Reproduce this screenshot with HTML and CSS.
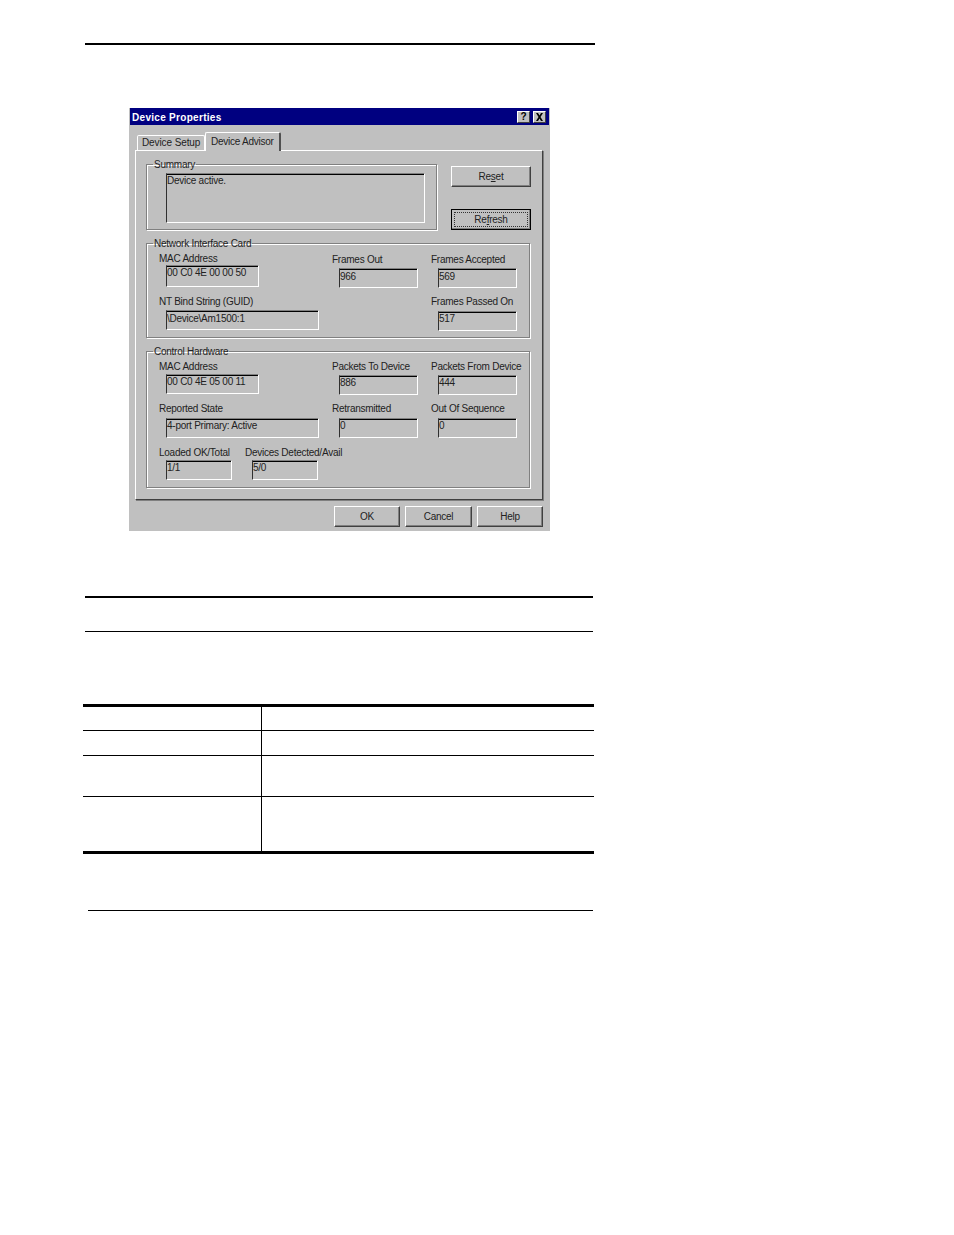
FILE: index.html
```html
<!DOCTYPE html>
<html lang="en">
<head>
    <meta charset="UTF-8">
    <meta name="viewport" content="width=device-width, initial-scale=1.0">
    <title>Device Properties</title>
    <link rel="stylesheet" href="styles.css">
</head>
<body>
    <div class="rule rule-top"></div>

    <div class="dialog">
        <div class="titlebar">
            <span class="title-text">Device Properties</span>
            <span class="title-btn">?</span>
            <span class="title-btn title-close">
                <svg width="9" height="8" viewBox="0 0 9 8"><path d="M1 0h2l1.500 2.500L6 0h2L5.500 4 8 8H6L4.500 5.500 3 8H1l2.500-4z" fill="#000"/></svg>
            </span>
        </div>

        <div class="tabs">
            <div class="tab">Device Setup</div>
            <div class="tab tab-active">Device Advisor</div>
        </div>

        <div class="panel">
            <div class="top-row">
                <fieldset class="group group-summary">
                    <legend>Summary</legend>
                    <div class="field field-summary">Device active.</div>
                </fieldset>
                <div class="side-buttons">
                    <button class="btn btn-side">Re<u>s</u>et</button>
                    <button class="btn btn-side btn-default"><span class="focus">Re<u>f</u>resh</span></button>
                </div>
            </div>

            <fieldset class="group group-nic">
                <legend>Network Interface Card</legend>
                <div class="fields">
                    <div class="cell">
                        <label>MAC Address</label>
                        <div class="field f-wide m1 h22">00 C0 4E 00 00 50</div>
                    </div>
                    <div class="cell shift1">
                        <label>Frames Out</label>
                        <div class="field f-small m3">966</div>
                    </div>
                    <div class="cell shift1">
                        <label>Frames Accepted</label>
                        <div class="field f-small m3">569</div>
                    </div>
                    <div class="cell">
                        <label>NT Bind String (GUID)</label>
                        <div class="field f-long m3">\Device\Am1500:1</div>
                    </div>
                    <div class="cell col3">
                        <label>Frames Passed On</label>
                        <div class="field f-small m4">517</div>
                    </div>
                </div>
            </fieldset>

            <fieldset class="group group-hw">
                <legend>Control Hardware</legend>
                <div class="fields">
                    <div class="cell">
                        <label>MAC Address</label>
                        <div class="field f-wide m2">00 C0 4E 05 00 11</div>
                    </div>
                    <div class="cell">
                        <label>Packets To Device</label>
                        <div class="field f-small m3">886</div>
                    </div>
                    <div class="cell">
                        <label>Packets From Device</label>
                        <div class="field f-small m3">444</div>
                    </div>
                    <div class="cell">
                        <label>Reported State</label>
                        <div class="field f-long m4">4-port Primary: Active</div>
                    </div>
                    <div class="cell">
                        <label>Retransmitted</label>
                        <div class="field f-small m4">0</div>
                    </div>
                    <div class="cell">
                        <label>Out Of Sequence</label>
                        <div class="field f-small m4">0</div>
                    </div>
                    <div class="cell-pair">
                        <div class="cell pair-left">
                            <label>Loaded OK/Total</label>
                            <div class="field f-tiny m2">1/1</div>
                        </div>
                        <div class="cell">
                            <label>Devices Detected/Avail</label>
                            <div class="field f-tiny m2">5/0</div>
                        </div>
                    </div>
                </div>
            </fieldset>
        </div>

        <div class="footer">
            <button class="btn btn-foot">OK</button>
            <button class="btn btn-foot btn-cancel">Cancel</button>
            <button class="btn btn-foot">Help</button>
        </div>
    </div>

    <div class="rule rule-section"></div>
    <div class="rule rule-thin"></div>

    <!-- table cells are blank in the source page -->
    <table class="info-table">
        <tr class="row-1"><td class="col-name"></td><td></td></tr>
        <tr class="row-2"><td class="col-name"></td><td></td></tr>
        <tr class="row-3"><td class="col-name"></td><td></td></tr>
        <tr class="row-4"><td class="col-name"></td><td></td></tr>
    </table>

    <div class="rule rule-end"></div>
</body>
</html>
```

FILE: styles.css
```css
body {
    margin: 0;
    padding-top: 43px;
    background-color: #fff;
    font-family: "Liberation Sans", Arial, sans-serif;
    font-size: 10px;
    letter-spacing: -0.25px;
    color: #222;
}
.rule {
    background-color: #000;
}
.rule-top {
    height: 2px;
    width: 510px;
    margin-left: 85px;
}
.rule-section {
    height: 2px;
    width: 508px;
    margin: 65px 0 0 85px;
}
.rule-thin {
    height: 1px;
    width: 508px;
    margin: 33px 0 0 85px;
}
.rule-end {
    height: 1px;
    width: 505px;
    margin: 56px 0 0 88px;
}

/* Dialog window */
.dialog {
    width: 421px;
    height: 423px;
    margin: 63px 0 0 129px;
    background-color: #c0c0c0;
}
.titlebar {
    display: flex;
    align-items: center;
    height: 17px;
    margin: 0 1px;
    padding: 0 3px 0 2px;
    background-color: #000080;
    color: #fff;
}
.title-text {
    flex: 1;
    padding-top: 2px;
    font-weight: bold;
    letter-spacing: 0.3px;
}
.title-btn {
    display: flex;
    align-items: center;
    justify-content: center;
    width: 13px;
    height: 12px;
    margin-left: 3px;
    box-sizing: border-box;
    background-color: #c0c0c0;
    border: 1px solid;
    border-color: #fff #404040 #404040 #fff;
    color: #000;
    font-weight: bold;
}

/* Tabs */
.tabs {
    display: flex;
    align-items: flex-end;
    height: 18px;
    margin: 7px 0 0 8px;
}
.tab {
    width: 68px;
    height: 15px;
    line-height: 13px;
    padding-left: 4px;
    box-sizing: border-box;
    letter-spacing: -0.1px;
    overflow: hidden;
    white-space: nowrap;
    border: 1px solid #fff;
    border-bottom: none;
    border-radius: 2px 2px 0 0;
}
.tab-active {
    position: relative;
    width: 76px;
    height: 19px;
    line-height: 18px;
    padding-left: 5px;
    margin-bottom: -1px;
    letter-spacing: -0.25px;
    background-color: #c0c0c0;
    border-right: 2px solid #505050;
}
.panel {
    width: 408px;
    height: 350px;
    margin-left: 6px;
    padding: 7px 0 0 10px;
    box-sizing: border-box;
    border: 1px solid;
    border-color: #fff #404040 #404040 #fff;
    box-shadow: 1px 1px 0 #808080;
}
.top-row {
    display: flex;
}

/* Group boxes */
.group {
    margin: 0;
    padding: 0;
    box-sizing: border-box;
    min-width: 0;
    border: 1px solid #808080;
    box-shadow: 1px 1px 0 #fff, inset 1px 1px 0 #fff;
}
.group legend {
    margin-left: -6px;
    padding: 0 1px;
    height: 12px;
    line-height: 14px;
}
.group-summary {
    width: 291px;
    padding: 3px 0 4px 19px;
}
.group-summary legend {
    margin-left: -13px;
}
.group-nic {
    width: 384px;
    margin-top: 7px;
    padding: 3px 0 6px 12px;
}
.group-hw {
    width: 384px;
    margin-top: 7px;
    padding: 3px 0 7px 12px;
}
.fields {
    display: grid;
    grid-template-columns: 173px 99px 1fr;
}
.group-nic .fields {
    grid-template-rows: 43px auto;
}
.group-hw .fields {
    grid-template-rows: 42px 44px auto;
}
.col3 {
    grid-column: 3;
}
.shift1 {
    padding-top: 1px;
}
.cell label {
    display: block;
    height: 12px;
    line-height: 14px;
    white-space: nowrap;
}
.cell-pair {
    display: flex;
    grid-column: 1;
}
.pair-left {
    flex: 0 0 86px;
}

/* Sunken read-only boxes */
.field {
    height: 20px;
    margin-left: 7px;
    box-sizing: border-box;
    line-height: 13px;
    white-space: nowrap;
    border: 1px solid;
    border-color: #808080 #fff #fff #303030;
    box-shadow: inset 0 1px 0 #000;
}
.group-nic .m3 {
    line-height: 15px;
}
.field-summary {
    width: 259px;
    height: 50px;
    margin-left: 0;
    line-height: 14px;
}
.f-wide { width: 93px; }
.f-long { width: 153px; }
.f-small { width: 79px; }
.f-tiny { width: 66px; }
.h22 { height: 22px; }
.m1 { margin-top: 1px; }
.m2 { margin-top: 2px; }
.m3 { margin-top: 3px; }
.m4 { margin-top: 4px; }

/* Buttons */
.btn {
    display: block;
    padding: 0;
    box-sizing: border-box;
    background-color: #c0c0c0;
    font-family: inherit;
    font-size: inherit;
    letter-spacing: inherit;
    color: inherit;
    border: 1px solid;
    border-color: #fff #404040 #404040 #fff;
    box-shadow: inset -1px -1px 0 #808080;
}
.side-buttons {
    display: flex;
    flex-direction: column;
    gap: 22px;
    margin: 8px 0 0 14px;
}
.btn-side {
    width: 80px;
    height: 21px;
}
.btn-default {
    border-color: #000;
    padding: 2px;
}
.focus {
    display: block;
    height: 100%;
    line-height: 13px;
    box-sizing: border-box;
    border: 1px dotted #333;
}
.footer {
    display: flex;
    justify-content: flex-end;
    gap: 5px;
    margin: 6px 7px 0 0;
}
.btn-foot {
    width: 66px;
    height: 21px;
}
.btn-cancel {
    width: 67px;
}

/* Blank table under the dialog */
.info-table {
    width: 511px;
    margin: 72px 0 0 83px;
    border-spacing: 0;
    border-top: 3px solid #000;
    border-bottom: 3px solid #000;
    table-layout: fixed;
}
.info-table td {
    padding: 0;
    border-bottom: 1px solid #000;
}
.info-table tr:last-child td {
    border-bottom: none;
}
.col-name {
    width: 179px;
    box-sizing: border-box;
    border-right: 1px solid #000;
}
.row-1 td { height: 23px; }
.row-2 td { height: 24px; }
.row-3 td { height: 40px; }
.row-4 td { height: 54px; }
```
